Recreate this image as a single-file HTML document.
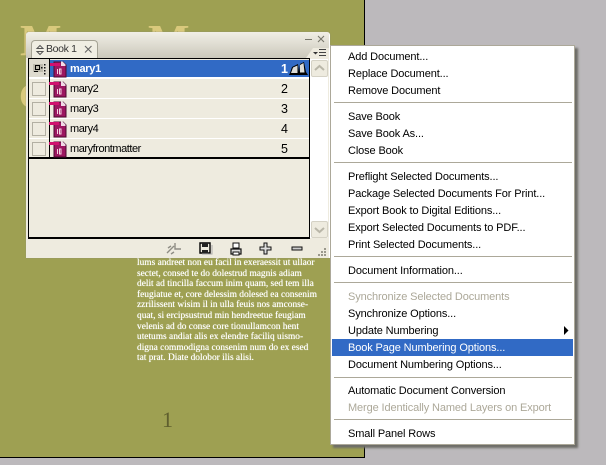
<!DOCTYPE html>
<html><head><meta charset="utf-8">
<style>
html,body{margin:0;padding:0;}
body{width:606px;height:465px;overflow:hidden;position:relative;background:#bcb9bc;font-family:"Liberation Sans",sans-serif;}
div,span,svg{position:absolute;display:block;}
#page{left:0;top:0;width:364px;height:457px;background:#9ea052;border-right:1px solid #000;border-bottom:1px solid #000;}
.h{font-family:"Liberation Serif",serif;color:#d9c97c;font-weight:bold;white-space:nowrap;line-height:1;}
#panel{left:26px;top:32px;width:303px;height:226px;background:#eeebdf;border-radius:3px 3px 0 0;border-right:1px solid #fff;box-shadow:0 0 1px #888;}
#tbar{left:0;top:0;width:303px;height:26px;background:linear-gradient(#f1efe6,#cbc8bb);border-radius:3px 3px 0 0;}
#tab{left:5px;top:8px;width:65px;height:17px;background:#f0eee3;border:1px solid #a5a395;border-bottom:none;border-radius:4px 4px 0 0;color:#333;}
.row{left:29px;width:280px;height:19px;background:#eeebdf;font-size:12px;color:#000;white-space:nowrap;}
.cb{left:3px;top:3px;width:12px;height:12px;border:1px solid #b3b0a3;background:#eeebdf;}
.n{left:41px;top:2px;line-height:17px;font-family:"Liberation Sans",sans-serif;font-size:11px;letter-spacing:-.45px;}
.p{left:252px;top:2px;line-height:17px;font-family:"Liberation Sans",sans-serif;font-size:12.5px;}
#menu{left:330px;top:45px;width:243px;height:398px;background:#fff;border:1px solid #aca899;box-shadow:3px 3px 2px #6e6d68;}
.m{left:17px;margin-top:1px;font-size:11px;line-height:17px;height:17px;color:#000;white-space:nowrap;font-family:"Liberation Sans",sans-serif;letter-spacing:-.12px;}
.d{color:#aca899;}
.s{left:3px;width:238px;height:1px;background:#aca899;}
#hl{left:1px;top:293px;width:241px;height:17px;background:#316ac5;}
.t{left:137px;margin-top:1px;color:#fff;font-family:"Liberation Serif",serif;font-size:9.4px;line-height:11px;white-space:nowrap;height:11px;text-shadow:0 0 .6px #fff;}
</style></head>
<body>
<div id="page"></div>
<div class="h" style="left:20px;top:19px;font-size:44px;">M</div>
<div class="h" style="left:148px;top:19px;font-size:44px;">M</div>
<div class="h" style="left:19px;top:78px;font-size:36px;">C</div>
<div style="left:162px;top:408px;font-family:'Liberation Serif',serif;font-size:22px;line-height:24px;color:#5f5f2e;">1</div>

<div class="t" style="top:257px;">lums andreet non eu facil in exeraessit ut ullaor</div>
<div class="t" style="top:268px;">sectet, consed te do dolestrud magnis adiam</div>
<div class="t" style="top:278px;">delit ad tincilla faccum inim quam, sed tem illa</div>
<div class="t" style="top:289px;">feugiatue et, core delessim dolesed ea consenim</div>
<div class="t" style="top:299px;">zzrilissent wisim il in ulla feuis nos amconse-</div>
<div class="t" style="top:310px;">quat, si ercipsustrud min hendreetue feugiam</div>
<div class="t" style="top:321px;">velenis ad do conse core tionullamcon hent</div>
<div class="t" style="top:331px;">utetums andiat alis ex elendre faciliq uismo-</div>
<div class="t" style="top:342px;">digna commodigna consenim num do ex esed</div>
<div class="t" style="top:352px;">tat prat. Diate dolobor ilis alisi.</div>

<div id="panel">
  <div id="tbar"></div>
  <div id="tab">
    <svg style="left:3px;top:3px" width="10" height="12"><path d="M5 1.500L8 4.500H2ZM2 7.500H8L5 10.500Z" stroke="#555" fill="none"/></svg>
    <span style="left:14px;top:1px;line-height:15px;white-space:nowrap;font-size:10.5px;letter-spacing:-.35px">Book 1</span>
    <svg style="left:52px;top:4px" width="9" height="9"><path d="M1 1L7.500 7.500M7.500 1L1 7.500" stroke="#666" stroke-width="1.100" fill="none"/></svg>
  </div>
  <svg style="left:278px;top:0" width="24" height="15"><path d="M1 7.500H8M14 4L20 10M20 4L14 10" stroke="#77766b" stroke-width="1.100" fill="none"/></svg>
  <svg style="left:280px;top:15px" width="23" height="12"><path d="M0 11L7 1H23V11Z" fill="#eeebdf"/><path d="M7 5h5l-2.500 2.500z" fill="#333"/><path d="M13 2.500h7M13 5.500h7M13 8.500h7" stroke="#444" fill="none"/></svg>
</div>

<div style="left:28px;top:58px;width:282px;height:181px;background:#000;"></div>
<div style="left:29px;top:59px;width:280px;height:178px;background:#eeebdf;"></div>
<div style="left:29px;top:59px;width:280px;height:99px;background:#fff;"></div>

<div class="row" style="top:59px;height:18px;">
  <div style="left:0;top:0;width:20px;height:18px;background:#dedbcf;"></div>
  <div style="left:21px;top:1px;width:259px;height:17px;background:#316ac5;"></div>
  <div class="n" style="color:#fff;font-weight:bold;letter-spacing:-.3px">mary1</div>
  <div class="p" style="color:#fff;font-weight:bold;">1</div>
  <svg style="left:3px;top:3px" width="16" height="13"><path d="M1 2h10v8H1z" fill="#bdbaad"/><path d="M3.500 3.500h4v4h-4zM2 9.500h4" stroke="#000" fill="none"/><path d="M9 5h1.500v1.500H9zM12 2h1.500v1.500H12zM12 5h1.500v1.500H12zM12 8h1.500v1.500H12zM12 11h1.500v1.500H12z" fill="#111"/></svg>
  <svg style="left:260px;top:3px" width="19" height="14"><path d="M0 13L1 11L3 5L9 2L10 10L11 2L15 0L17 10L19 13Z" fill="#000"/><path d="M2 11L4 5.500L8.500 3.500V11ZM11 10.500V3L14.500 1L15.500 10.500Z" fill="#dcdcd8"/></svg>
</div>
<div class="row" style="top:79px;"><div class="cb"></div><div class="n">mary2</div><div class="p">2</div></div>
<div class="row" style="top:99px;"><div class="cb"></div><div class="n">mary3</div><div class="p">3</div></div>
<div class="row" style="top:119px;"><div class="cb"></div><div class="n">mary4</div><div class="p">4</div></div>
<div class="row" style="top:139px;"><div class="cb"></div><div class="n">maryfrontmatter</div><div class="p">5</div></div>
<div style="left:29px;top:157px;width:280px;height:2px;background:#000;"></div>
<div style="left:49px;top:59px;width:1px;height:98px;background:#000;"></div>

<svg style="left:49px;top:60px" width="18" height="100">
  <g><path d="M5 2h9l3 3v12H5z" fill="#9c1760" stroke="#4d0a30"/><path d="M12 1.500h1.500l3 3v1.500H12z" fill="#f1dbe6"/><path d="M1 3h10v3H1z" fill="#d0106e"/><path d="M8.500 9v5M10.500 9h1.500v5h-1.500z" stroke="#f4d5e4" fill="none"/></g>
  <g transform="translate(0,20)"><path d="M5 2h9l3 3v12H5z" fill="#9c1760" stroke="#4d0a30"/><path d="M12 1.500h1.500l3 3v1.500H12z" fill="#f1dbe6"/><path d="M0 2h10v3H0z" fill="#d0106e"/><path d="M8.500 9v5M10.500 9h1.500v5h-1.500z" stroke="#f4d5e4" fill="none"/></g>
  <g transform="translate(0,40)"><path d="M5 2h9l3 3v12H5z" fill="#9c1760" stroke="#4d0a30"/><path d="M12 1.500h1.500l3 3v1.500H12z" fill="#f1dbe6"/><path d="M0 2h10v3H0z" fill="#d0106e"/><path d="M8.500 9v5M10.500 9h1.500v5h-1.500z" stroke="#f4d5e4" fill="none"/></g>
  <g transform="translate(0,60)"><path d="M5 2h9l3 3v12H5z" fill="#9c1760" stroke="#4d0a30"/><path d="M12 1.500h1.500l3 3v1.500H12z" fill="#f1dbe6"/><path d="M0 2h10v3H0z" fill="#d0106e"/><path d="M8.500 9v5M10.500 9h1.500v5h-1.500z" stroke="#f4d5e4" fill="none"/></g>
  <g transform="translate(0,80)"><path d="M5 2h9l3 3v12H5z" fill="#9c1760" stroke="#4d0a30"/><path d="M12 1.500h1.500l3 3v1.500H12z" fill="#f1dbe6"/><path d="M0 2h10v3H0z" fill="#d0106e"/><path d="M8.500 9v5M10.500 9h1.500v5h-1.500z" stroke="#f4d5e4" fill="none"/></g>
</svg>

<div style="left:310px;top:59px;width:18px;height:179px;background:#fff;"></div>
<div style="left:311px;top:60px;width:15px;height:15px;background:#eeebdf;border:1px solid #d5d2c5;border-radius:2px;"></div>
<div style="left:311px;top:221px;width:15px;height:15px;background:#eeebdf;border:1px solid #d5d2c5;border-radius:2px;"></div>
<svg style="left:311px;top:60px" width="17" height="17"><path d="M4 10L8.500 6L13 10" stroke="#b9b6a8" stroke-width="2" fill="none"/></svg>
<svg style="left:311px;top:221px" width="17" height="17"><path d="M4 7L8.500 11L13 7" stroke="#b9b6a8" stroke-width="2" fill="none"/></svg>

<svg style="left:165px;top:241px" width="165" height="18">
  <path d="M2 12L9 5M10 2V8H16M3 7L6 5M6 13L9 11" stroke="#8f8d85" stroke-width="1.400" fill="none"/>
  <path d="M35 2h10v10H35z" fill="#eeebdf" stroke="#000" stroke-width="1.400"/><path d="M37 2h6v4h-6zM37 9h6v4h-6z" fill="#222"/><path d="M47 4v9H37" stroke="#aaa" fill="none"/>
  <path d="M66 8h10v5H66z" fill="#ddd" stroke="#111" stroke-width="1.200"/><path d="M68 2h6v5h-6z" fill="#fff" stroke="#111"/><path d="M68 11h6v3h-6z" fill="#fff" stroke="#111"/>
  <path d="M99 2h3v4h4v3h-4v4h-3V9h-4V6h4z" fill="#ddd" stroke="#111"/>
  <path d="M127 6h10v3h-10z" fill="#ccc" stroke="#111"/>
  <path d="M159 13h2v2h-2zM156 13h2v2h-2zM153 13h2v2h-2zM159 10h2v2h-2zM156 10h2v2h-2zM159 7h2v2h-2z" fill="#9a988c"/>
</svg>

<div id="menu">
  <div id="hl"></div>
  <div class="m" style="top:2px">Add Document...</div>
  <div class="m" style="top:19px">Replace Document...</div>
  <div class="m" style="top:36px">Remove Document</div>
  <div class="s" style="top:56px"></div>
  <div class="m" style="top:62px">Save Book</div>
  <div class="m" style="top:79px">Save Book As...</div>
  <div class="m" style="top:96px">Close Book</div>
  <div class="s" style="top:116px"></div>
  <div class="m" style="top:122px">Preflight Selected Documents...</div>
  <div class="m" style="top:139px">Package Selected Documents For Print...</div>
  <div class="m" style="top:156px">Export Book to Digital Editions...</div>
  <div class="m" style="top:173px">Export Selected Documents to PDF...</div>
  <div class="m" style="top:190px">Print Selected Documents...</div>
  <div class="s" style="top:210px"></div>
  <div class="m" style="top:216px">Document Information...</div>
  <div class="s" style="top:236px"></div>
  <div class="m d" style="top:242px">Synchronize Selected Documents</div>
  <div class="m" style="top:259px">Synchronize Options...</div>
  <div class="m" style="top:276px">Update Numbering</div>
  <svg style="left:232px;top:280px" width="6" height="9"><path d="M1 0L5.500 4.500L1 9Z" fill="#000"/></svg>
  <div class="m" style="top:293px;color:#fff">Book Page Numbering Options...</div>
  <div class="m" style="top:310px">Document Numbering Options...</div>
  <div class="s" style="top:331px"></div>
  <div class="m" style="top:336px">Automatic Document Conversion</div>
  <div class="m d" style="top:353px">Merge Identically Named Layers on Export</div>
  <div class="s" style="top:373px"></div>
  <div class="m" style="top:379px">Small Panel Rows</div>
</div>
</body></html>
